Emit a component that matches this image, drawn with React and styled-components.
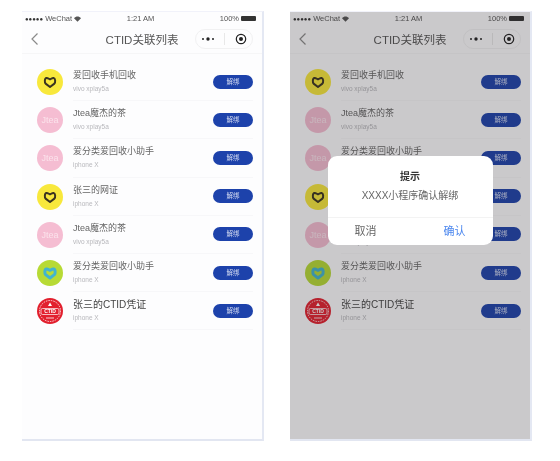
import React from 'react'
import styled, { createGlobalStyle } from 'styled-components'

const GlobalStyle = createGlobalStyle`
  html, body {
    margin: 0;
    background: #fff;
    font-family: "Liberation Sans", "Noto Sans CJK SC", sans-serif;
  }
`

const Page = styled.div`
  display: flex;
  gap: 26px;
  width: 560px;
  height: 461px;
  box-sizing: border-box;
  padding: 11px 0 0 22px;
  overflow: hidden;
`

const Phone = styled.div`
  position: relative;
  width: 242px;
  height: 430px;
  box-sizing: border-box;
  background: #fdfdfe;
  border-right: 2px solid #e4e8f3;
  border-bottom: 2px solid #e2e6f1;
  border-top: 1px solid #f1f2fa;
  filter: blur(0.5px);
`

const StatusBar = styled.div`
  display: grid;
  grid-template-columns: 1fr auto 1fr;
  align-items: center;
  height: 13px;
  padding: 0 6px 0 3px;
  font-size: 7.5px;
  color: #555;
`

const StatusSide = styled.div`
  display: flex;
  align-items: center;
  gap: 2px;
  justify-content: ${p => (p.$end ? 'flex-end' : 'flex-start')};
`

const SignalDots = styled.span`
  font-size: 6px;
  color: #333;
`

const Battery = styled.span`
  width: 15px;
  height: 5px;
  border-radius: 1px;
  background: #333;
`

const NavBar = styled.div`
  display: flex;
  align-items: center;
  height: 28px;
  padding: 0 9px 0 8px;
  border-bottom: 1px solid #f6f6f7;
`

const BackIcon = styled.svg`
  width: 9px;
  height: 14px;
  fill: none;
  stroke: #8a8a8a;
  stroke-width: 1.2;
`

const NavTitle = styled.div`
  flex: 1;
  padding-left: 50px;
  text-align: center;
  font-size: 11.5px;
  color: #555;
`

const Capsule = styled.div`
  display: flex;
  align-items: center;
  justify-content: space-around;
  width: 58px;
  height: 20px;
  box-sizing: border-box;
  border: 1px solid #f1f1f2;
  border-radius: 10px;
`

const CapsuleRule = styled.span`
  width: 1px;
  height: 12px;
  background: #e8e8e8;
`

const CapsuleIcon = styled.svg`
  width: ${p => p.$w}px;
  height: 12px;
  color: #222;
`

const List = styled.div`
  padding: 9px 9px 0 15px;
`

const Row = styled.div`
  display: flex;
  align-items: center;
  height: 38.2px;
  gap: 10px;
`

const AvatarBox = styled.div`
  flex: none;
  display: flex;
  align-items: center;
  justify-content: center;
  width: 26px;
  height: 26px;
  border-radius: 50%;
  background: ${p => p.$bg};
  color: #fbe3ec;
  font-size: 9px;
  overflow: hidden;
`

const RowBody = styled.div`
  flex: 1;
  display: flex;
  align-items: center;
  justify-content: space-between;
  align-self: stretch;
  border-bottom: 1px solid #f7f7f9;
`

const RowText = styled.div`
  display: flex;
  flex-direction: column;
  gap: 4px;
`

const RowTitle = styled.div`
  font-size: ${p => (p.$strong ? '10px' : '9px')};
  line-height: 11px;
  color: ${p => (p.$strong ? '#444' : '#666')};
`

const RowSub = styled.div`
  font-size: 6.5px;
  line-height: 8px;
  color: #b8b8bc;
`

const Unbind = styled.div`
  width: 40px;
  height: 14px;
  border-radius: 7px;
  background: #1d42ab;
  color: #d5dcf2;
  font-size: 6.5px;
  line-height: 14px;
  text-align: center;
`

const Overlay = styled.div`
  position: absolute;
  inset: 0;
  display: flex;
  justify-content: center;
  align-items: flex-start;
  padding-top: 144px;
  background: rgba(40, 36, 40, 0.24);
`

const Dialog = styled.div`
  width: 165px;
  height: 89px;
  display: flex;
  flex-direction: column;
  background: #fff;
  border-radius: 9px;
  overflow: hidden;
`

const DialogTitle = styled.div`
  margin-top: 14px;
  text-align: center;
  font-size: 10px;
  font-weight: 700;
  line-height: 13px;
  color: #333;
`

const DialogMessage = styled.div`
  margin-top: 7px;
  text-align: center;
  font-size: 10px;
  line-height: 12px;
  color: #666;
`

const DialogActions = styled.div`
  margin-top: auto;
  display: flex;
  justify-content: space-between;
  height: 27px;
  padding: 0 27px;
  border-top: 1px solid #f3f3f3;
`

const DialogAction = styled.div`
  font-size: 11px;
  line-height: 26px;
  color: ${p => (p.$primary ? '#4a86ee' : '#666')};
`

const Heart = ({ stroke, width }) => (
  <svg width="14" height="14" viewBox="0 0 14 14">
    <path
      d="M7 12 2.6 8.6C1.4 7.4 1.6 3.2 3.4 3 5 2.8 5.8 4 7 4.4 8.2 4 9 2.8 10.6 3c1.800.2 2 4.400.8 5.6Z"
      fill="none"
      stroke={stroke}
      strokeWidth={width}
      strokeLinejoin="round"
    />
  </svg>
)

const Seal = () => (
  <svg width="26" height="26" viewBox="0 0 26 26">
    <circle cx="13" cy="13" r="10.5" fill="none" stroke="#fff" strokeWidth="0.8" strokeDasharray="1.5 1" />
    <path d="M13 4.500 15 8h-4Z" fill="#fff" />
    <rect x="4" y="10.500" width="18" height="6" rx="1.500" fill="none" stroke="#fff" strokeWidth="0.7" />
    <text x="13" y="15.300" textAnchor="middle" fontSize="5" fontWeight="700" fill="#fff">CTID</text>
    <path d="M9 20h8" stroke="#fff" strokeWidth="0.8" />
  </svg>
)

const Avatar = ({ kind }) => {
  if (kind === 'yellow') {
    return (
      <AvatarBox $bg="#f8e83c">
        <Heart stroke="#3a3420" width="2" />
      </AvatarBox>
    )
  }
  if (kind === 'pink') return <AvatarBox $bg="#f5bdd2">Jtea</AvatarBox>
  if (kind === 'green') {
    return (
      <AvatarBox $bg="#b7da35">
        <Heart stroke="#42b4cf" width="3" />
      </AvatarBox>
    )
  }
  return (
    <AvatarBox $bg="#e2202e">
      <Seal />
    </AvatarBox>
  )
}

const rows = [
  { kind: 'yellow', title: '爱回收手机回收', sub: 'vivo xplay5a' },
  { kind: 'pink', title: 'Jtea魔杰的茶', sub: 'vivo xplay5a' },
  { kind: 'pink', title: '爱分类爱回收小助手', sub: 'iphone X' },
  { kind: 'yellow', title: '张三的网证', sub: 'iphone X' },
  { kind: 'pink', title: 'Jtea魔杰的茶', sub: 'vivo xplay5a' },
  { kind: 'green', title: '爱分类爱回收小助手', sub: 'iphone X' },
  { kind: 'red', title: '张三的CTID凭证', sub: 'iphone X', strong: true },
]

const Screen = ({ children }) => (
  <Phone>
    <StatusBar>
      <StatusSide>
        <SignalDots>●●●●●</SignalDots>
        WeChat
        <svg width="7" height="6" viewBox="0 0 8 6">
          <path d="M4 6 0 2C2.200-.4 5.800-.4 8 2Z" fill="#555" />
        </svg>
      </StatusSide>
      <span>1:21 AM</span>
      <StatusSide $end>
        100%
        <Battery />
      </StatusSide>
    </StatusBar>
    <NavBar>
      <BackIcon viewBox="0 0 9 14">
        <path d="M7.500 1.500 2 7l5.500 5.500" />
      </BackIcon>
      <NavTitle>CTID关联列表</NavTitle>
      <Capsule>
        <CapsuleIcon $w={14} viewBox="0 0 14 12">
          <circle cx="2" cy="6" r="1" fill="currentColor" />
          <circle cx="7" cy="6" r="1.700" fill="currentColor" />
          <circle cx="12" cy="6" r="1" fill="currentColor" />
        </CapsuleIcon>
        <CapsuleRule />
        <CapsuleIcon $w={12} viewBox="0 0 12 12">
          <circle cx="6" cy="6" r="4.700" fill="none" stroke="currentColor" strokeWidth="1.200" />
          <circle cx="6" cy="6" r="2" fill="currentColor" />
        </CapsuleIcon>
      </Capsule>
    </NavBar>
    <List>
      {rows.map((row, i) => (
        <Row key={i}>
          <Avatar kind={row.kind} />
          <RowBody>
            <RowText>
              <RowTitle $strong={row.strong}>{row.title}</RowTitle>
              <RowSub>{row.sub}</RowSub>
            </RowText>
            <Unbind>解绑</Unbind>
          </RowBody>
        </Row>
      ))}
    </List>
    {children}
  </Phone>
)

export default function App() {
  return (
    <Page>
      <GlobalStyle />
      <Screen />
      <Screen>
        <Overlay>
          <Dialog>
            <DialogTitle>提示</DialogTitle>
            <DialogMessage>XXXX小程序确认解绑</DialogMessage>
            <DialogActions>
              <DialogAction>取消</DialogAction>
              <DialogAction $primary>确认</DialogAction>
            </DialogActions>
          </Dialog>
        </Overlay>
      </Screen>
    </Page>
  )
}
